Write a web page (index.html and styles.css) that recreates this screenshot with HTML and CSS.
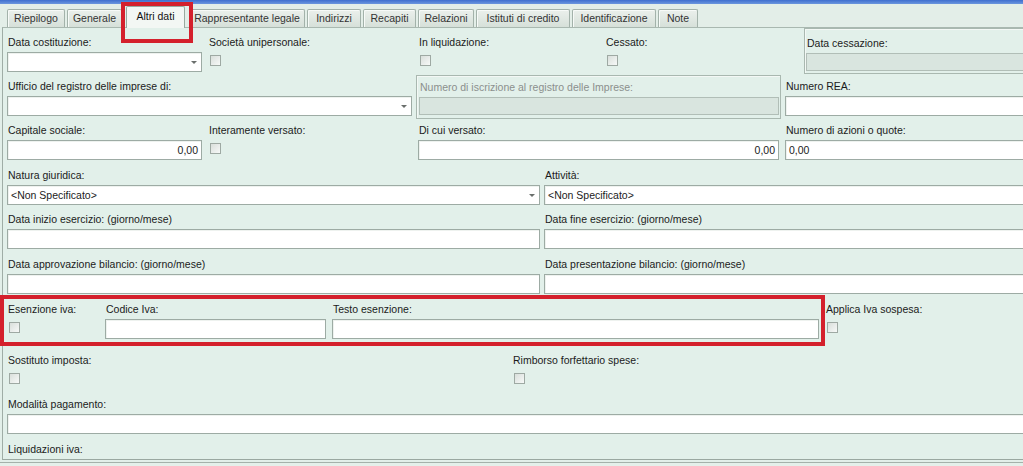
FILE: index.html
```html
<!DOCTYPE html>
<html lang="it">
<head>
<meta charset="utf-8">
<title>Altri dati</title>
<link rel="stylesheet" href="styles.css">
</head>
<body>
<div class="app">
  <div class="topbar"></div>
  <div class="tabstrip">
    <div class="tab t-riepilogo">Riepilogo</div>
    <div class="tab t-generale">Generale</div>
    <div class="tab active t-altri">Altri dati</div>
    <div class="tab t-rappr">Rappresentante legale</div>
    <div class="tab t-indirizzi">Indirizzi</div>
    <div class="tab t-recapiti">Recapiti</div>
    <div class="tab t-relazioni">Relazioni</div>
    <div class="tab t-istituti">Istituti di credito</div>
    <div class="tab t-ident">Identificazione</div>
    <div class="tab t-note">Note</div>
  </div>

  <div class="panel">
    <div class="row row-1">
      <div class="field">
        <div class="label">Data costituzione:</div>
        <div class="input select"><span class="value"></span><span class="arrow"></span></div>
      </div>
      <div class="field">
        <div class="label">Società unipersonale:</div>
        <div class="check-wrap"><span class="check"></span></div>
      </div>
      <div class="field">
        <div class="label">In liquidazione:</div>
        <div class="check-wrap"><span class="check"></span></div>
      </div>
      <div class="field">
        <div class="label">Cessato:</div>
        <div class="check-wrap"><span class="check"></span></div>
      </div>
      <div class="group group-cessazione">
        <div class="label">Data cessazione:</div>
        <div class="input disabled"></div>
      </div>
    </div>

    <div class="row row-2">
      <div class="field">
        <div class="label">Ufficio del registro delle imprese di:</div>
        <div class="input select"><span class="value"></span><span class="arrow"></span></div>
      </div>
      <div class="group group-iscrizione">
        <div class="label muted">Numero di iscrizione al registro delle Imprese:</div>
        <div class="input disabled"></div>
      </div>
      <div class="field">
        <div class="label">Numero REA:</div>
        <div class="input"></div>
      </div>
    </div>

    <div class="row row-3">
      <div class="field">
        <div class="label">Capitale sociale:</div>
        <div class="input num">0,00</div>
      </div>
      <div class="field">
        <div class="label">Interamente versato:</div>
        <div class="check-wrap"><span class="check"></span></div>
      </div>
      <div class="field">
        <div class="label">Di cui versato:</div>
        <div class="input num">0,00</div>
      </div>
      <div class="field">
        <div class="label">Numero di azioni o quote:</div>
        <div class="input">0,00</div>
      </div>
    </div>

    <div class="row row-half row-4">
      <div class="field">
        <div class="label">Natura giuridica:</div>
        <div class="input select"><span class="value">&lt;Non Specificato&gt;</span><span class="arrow"></span></div>
      </div>
      <div class="field">
        <div class="label">Attività:</div>
        <div class="input">&lt;Non Specificato&gt;</div>
      </div>
    </div>

    <div class="row row-half row-5">
      <div class="field">
        <div class="label">Data inizio esercizio: (giorno/mese)</div>
        <div class="input"></div>
      </div>
      <div class="field">
        <div class="label">Data fine esercizio: (giorno/mese)</div>
        <div class="input"></div>
      </div>
    </div>

    <div class="row row-half row-6">
      <div class="field">
        <div class="label">Data approvazione bilancio: (giorno/mese)</div>
        <div class="input"></div>
      </div>
      <div class="field">
        <div class="label">Data presentazione bilancio: (giorno/mese)</div>
        <div class="input"></div>
      </div>
    </div>

    <div class="row row-iva">
      <div class="field">
        <div class="label">Esenzione iva:</div>
        <div class="check-wrap"><span class="check"></span></div>
      </div>
      <div class="field">
        <div class="label">Codice Iva:</div>
        <div class="input"></div>
      </div>
      <div class="field">
        <div class="label">Testo esenzione:</div>
        <div class="input"></div>
      </div>
      <div class="field">
        <div class="label">Applica Iva sospesa:</div>
        <div class="check-wrap"><span class="check"></span></div>
      </div>
    </div>

    <div class="row row-sostituto">
      <div class="field">
        <div class="label">Sostituto imposta:</div>
        <div class="check-wrap"><span class="check"></span></div>
      </div>
      <div class="field">
        <div class="label">Rimborso forfettario spese:</div>
        <div class="check-wrap"><span class="check"></span></div>
      </div>
    </div>

    <div class="row row-full">
      <div class="field">
        <div class="label">Modalità pagamento:</div>
        <div class="input"></div>
      </div>
    </div>

    <div class="row row-last">
      <div class="field">
        <div class="label">Liquidazioni iva:</div>
      </div>
    </div>
  </div>
  <div class="footer"></div>

  <div class="mark mark-tab"></div>
  <div class="mark mark-iva"></div>
</div>
</body>
</html>
```

FILE: styles.css
```css
html, body {
  margin: 0;
  padding: 0;
  overflow: hidden;
  background: #e2efe9;
}

body {
  font-family: "Liberation Sans", Arial, sans-serif;
  font-size: 10.5px;
  color: #1b1b1b;
}

.app {
  position: relative;
  width: 1090px;
  height: 466px;
  background: #e2efe9;
}

.topbar {
  height: 4px;
  background: linear-gradient(#3f6fcf, #6b96de);
}

/* ---------- tabs ---------- */
.tabstrip {
  height: 23px;
  display: flex;
  align-items: flex-end;
  padding-left: 7px;
  box-sizing: border-box;
  background: #e3eee8;
}

.tab {
  box-sizing: border-box;
  height: 18px;
  line-height: 16px;
  margin-right: 2px;
  text-align: center;
  white-space: nowrap;
  color: #343434;
  border: 1px solid #a3b2aa;
  border-bottom: none;
  border-radius: 2px 2px 0 0;
  background: linear-gradient(#ebf0ec, #d6e0d9);
  box-shadow: inset 1px 1px 0 #f7faf8;
}

.tab.active {
  position: relative;
  z-index: 1;
  height: 22px;
  line-height: 19px;
  padding-bottom: 2px;
  margin: 0 4px -1px 2px;
  color: #111;
  background: #f3f7f4;
  border-color: #98a99f;
  box-shadow: none;
}

.t-riepilogo { width: 58px; }
.t-generale  { width: 55px; }
.t-altri     { width: 59px; }
.t-rappr     { width: 116px; }
.t-indirizzi { width: 54px; }
.t-recapiti  { width: 53px; }
.t-relazioni { width: 56px; }
.t-istituti  { width: 94px; }
.t-ident     { width: 84px; }
.t-note      { width: 40px; }

/* ---------- panel ---------- */
.panel {
  margin-left: 2px;
  height: 433px;
  box-sizing: border-box;
  border-top: 1px solid #a9b8b0;
  border-left: 1px solid #9fada6;
  border-bottom: 1px solid #9aa8a1;
  padding: 4px 0 0 4px;
  background: #e2f0ea;
}

.row {
  display: grid;
  height: 40px;
  margin: 4px 0 0 0;
}

.row-1    { grid-template-columns: 195px 204px 181px 193px 1fr; column-gap: 6px; margin-top: 0; }
.row-2    { grid-template-columns: 405px 365px 1fr; column-gap: 4px; }
.row-3    { grid-template-columns: 195px 204px 361px 1fr; column-gap: 6px; }
.row-half { grid-template-columns: 533px 1fr; column-gap: 4px; }
.row-4    { margin-top: 5px; }
.row-6    { margin-top: 5px; }
.row-iva  { grid-template-columns: 92px 221px 487px 1fr; column-gap: 6px; margin-top: 5px; }
.row-sostituto { grid-template-columns: 499px 1fr; column-gap: 6px; margin-top: 11px; }
.row-full { grid-template-columns: 1fr; }
.row-last { grid-template-columns: 1fr; height: 20px; margin-top: 5px; }

.field {
  display: flex;
  flex-direction: column;
  min-width: 0;
}

.label {
  height: 20px;
  line-height: 20px;
  padding-left: 1px;
  white-space: nowrap;
}

.label.muted {
  color: #8b8f8d;
}

.input {
  box-sizing: border-box;
  height: 20px;
  border: 1px solid #9daba4;
  background: #fff;
  display: flex;
  align-items: center;
  padding: 0 3px;
  white-space: nowrap;
  color: #1b1b1b;
  box-shadow: inset 1px 1px 0 #eef2ef;
}

.input.num {
  justify-content: flex-end;
}

.input.select .value {
  flex: 1;
}

.arrow {
  width: 0;
  height: 0;
  border-left: 3px solid transparent;
  border-right: 3px solid transparent;
  border-top: 3px solid #6a6f6c;
  margin-right: 1px;
}

.input.disabled {
  height: 18px;
  background: #d9e5df;
  border-color: #b1beb7;
  box-shadow: none;
}

.check-wrap {
  height: 20px;
  padding: 3px 0 0 2px;
  box-sizing: border-box;
}

.check {
  display: block;
  width: 11px;
  height: 11px;
  box-sizing: border-box;
  border: 1px solid #9ea9a3;
  background: linear-gradient(135deg, #d9dfdb, #f7f9f8);
}

/* group boxes */
.group {
  box-sizing: border-box;
  border: 1px solid #a9b8b0;
  box-shadow: inset 1px 1px 0 #f3f8f5;
  display: flex;
  flex-direction: column;
}

.group-cessazione {
  margin-top: -4px;
  height: 46px;
  padding: 4px 0 0 1px;
  border-right: none;
}

.group-iscrizione {
  margin-top: -1px;
  height: 44px;
  padding: 1px 1px 0 2px;
}

.footer {
  height: 6px;
  margin-top: 2px;
  border-top: 1px solid #a4b1aa;
  background: #e4f0ea;
}

/* ---------- red annotation marks ---------- */
.mark {
  position: absolute;
  box-sizing: border-box;
  border: 4px solid #d4202c;
  pointer-events: none;
}

.mark-tab {
  left: 121px;
  top: 2px;
  width: 72px;
  height: 41px;
}

.mark-iva {
  left: 0;
  top: 295px;
  width: 825px;
  height: 51px;
}
```
